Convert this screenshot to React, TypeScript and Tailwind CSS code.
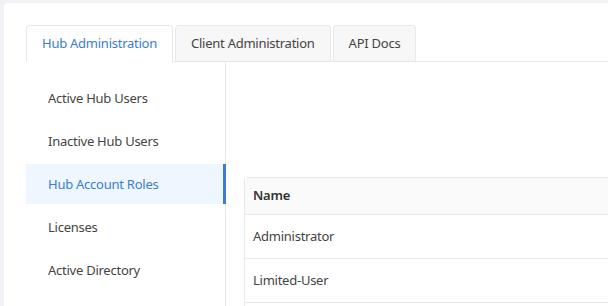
import React from "react";

const tabs = ["Hub Administration", "Client Administration", "API Docs"];
const navItems = [
  "Active Hub Users",
  "Inactive Hub Users",
  "Hub Account Roles",
  "Licenses",
  "Active Directory",
];
const roles = ["Administrator", "Limited-User"];

function App() {
  return (
    <div
      className="w-[608px] h-[306px] overflow-hidden bg-[#f0f2f5] pl-[4px] pt-[3px] text-[13px] tracking-[-0.25px] text-[#444]"
      style={{ fontFamily: '"Noto Sans", "Open Sans", sans-serif' }}
    >
      <div className="bg-white rounded-tl-[4px] h-[400px] w-[700px] pl-[22px] pt-[22px]">
        {/* tabs */}
        <div className="flex gap-[2px] border-b border-[#e8e8e8] h-[37px]">
          {tabs.map((t, i) => (
            <div
              key={t}
              className={
                i === 0
                  ? "h-[37px] px-[15px] flex items-center rounded-t-[4px] border border-b-0 border-[#e8e8e8] bg-white text-[#3b7dd1] mb-[-1px]"
                  : "h-[36px] px-[15px] flex items-center rounded-t-[4px] border border-b-0 border-[#e8e8e8] bg-[#f7f7f7]"
              }
            >
              {t}
            </div>
          ))}
        </div>

        <div className="flex">
          {/* side nav */}
          <div className="w-[200px] shrink-0 border-r border-[#e8e8e8] pt-[16px] h-[300px]">
            {navItems.map((n) => (
              <div
                key={n}
                className={
                  n === "Hub Account Roles"
                    ? "h-[40px] mb-[3px] pl-[22px] pt-[2px] flex items-center bg-[#eef6ff] text-[#3b7dd1] border-r-[3px] border-[#3b7dd1] mr-[-1px]"
                    : "h-[40px] mb-[3px] pl-[22px] pt-[2px] flex items-center"
                }
              >
                {n}
              </div>
            ))}
          </div>

          {/* content */}
          <div className="flex-1 pl-[18px] pt-[115px]">
            <div className="border border-[#e8e8e8] rounded-tl-[4px]">
              <div className="h-[37px] flex items-center px-[8px] bg-[#fafafa] border-b border-[#e8e8e8] font-semibold text-[#333]">
                Name
              </div>
              {roles.map((r) => (
                <div
                  key={r}
                  className="h-[44px] flex items-center px-[8px] border-b border-[#e8e8e8]"
                >
                  {r}
                </div>
              ))}
              <div className="h-[44px]" />
            </div>
          </div>
        </div>
      </div>
    </div>
  );
}

export default App;
